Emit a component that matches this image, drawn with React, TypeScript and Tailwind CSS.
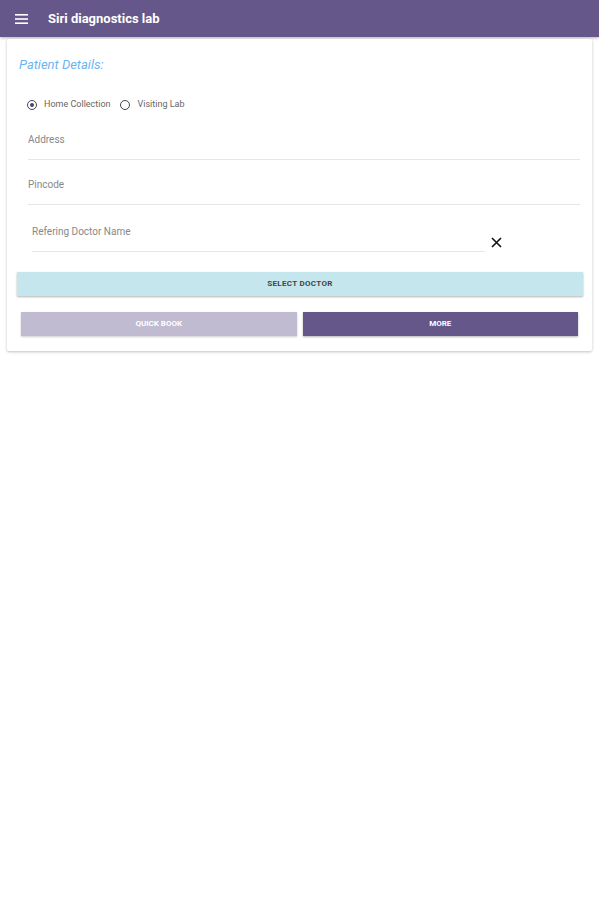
import React from 'react';

function Radio({ checked }: { checked?: boolean }) {
  return (
    <span className="flex h-[10px] w-[10px] items-center justify-center rounded-full border-[1.5px] border-[#444]">
      {checked && <span className="h-[4px] w-[4px] rounded-full bg-[#4a3f7a]" />}
    </span>
  );
}

export default function App() {
  return (
    <div className="min-h-[900px] w-full bg-white font-['Roboto',sans-serif]">
      {/* App bar */}
      <header className="flex h-[37px] items-center bg-[#65578a] pl-[15px] shadow-[0_1px_3px_rgba(0,0,0,0.3)]">
        <svg width="13" height="10" viewBox="0 0 13 10" className="text-white">
          <rect x="0" y="0" width="13" height="1.6" fill="currentColor" />
          <rect x="0" y="4.2" width="13" height="1.6" fill="currentColor" />
          <rect x="0" y="8.4" width="13" height="1.6" fill="currentColor" />
        </svg>
        <span className="ml-[20px] text-[13px] font-bold text-white">Siri diagnostics lab</span>
      </header>

      {/* Card */}
      <div className="mx-[7px] mt-[2px] rounded-[2px] bg-white pb-[15px] shadow-[0_1px_3px_rgba(0,0,0,0.25)]">
        <div className="px-[12px] pt-[17px] text-[13px] italic leading-[18px] text-[#6ab4f2]">Patient Details:</div>

        <div className="mt-[24px] flex items-center pl-[20px] text-[9px] text-[#666]">
          <Radio checked />
          <span className="ml-[7px]">Home Collection</span>
          <span className="ml-[9px]"><Radio /></span>
          <span className="ml-[8px]">Visiting Lab</span>
        </div>

        <div className="ml-[21px] mr-[12px] mt-[17px] h-[31px] border-b border-[#e6e6e6] pt-[3px] text-[10px] text-[#888]">
          Address
        </div>
        <div className="ml-[21px] mr-[12px] mt-[14px] h-[31px] border-b border-[#e6e6e6] pt-[3px] text-[10px] text-[#888]">
          Pincode
        </div>

        <div className="flex items-end">
          <div className="ml-[25px] mt-[18px] h-[29px] w-[453px] border-b border-[#e6e6e6] pt-[1px] text-[10px] text-[#888]">
            Refering Doctor Name
          </div>
          <svg width="11" height="11" viewBox="0 0 11 11" className="mb-[4px] ml-[6px]">
            <path d="M1 1 L10 10 M10 1 L1 10" stroke="#111" strokeWidth="1.6" />
          </svg>
        </div>

        <button className="mx-[10px] mt-[20px] flex h-[24px] w-[566px] items-center justify-center bg-[#c5e6ed] text-[8px] font-bold tracking-[0.3px] text-[#444] shadow-[0_1px_2px_rgba(0,0,0,0.3)]">
          SELECT DOCTOR
        </button>

        <div className="mx-[14px] mt-[16px] grid grid-cols-2 gap-[6px]">
          <button className="flex h-[24px] items-center justify-center bg-[#c0bbd1] text-[8px] font-bold text-white shadow-[0_1px_2px_rgba(0,0,0,0.2)]">
            QUICK BOOK
          </button>
          <button className="flex h-[24px] items-center justify-center bg-[#65578a] text-[8px] font-bold text-white shadow-[0_1px_2px_rgba(0,0,0,0.3)]">
            MORE
          </button>
        </div>
      </div>
    </div>
  );
}
